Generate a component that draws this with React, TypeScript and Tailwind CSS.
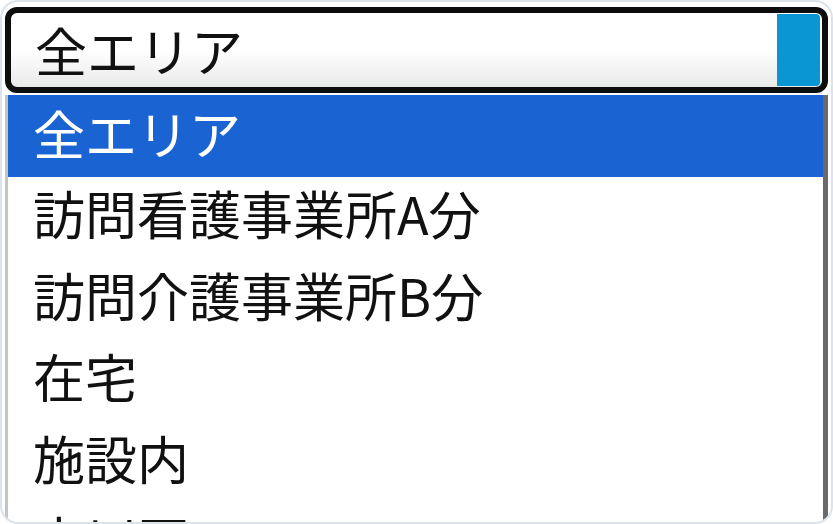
import React from "react";

const items = ["訪問看護事業所A分", "訪問介護事業所B分", "在宅", "施設内", "中川区"];

export default function App() {
  return (
    <div
      className="w-[833px] h-[524px] bg-white overflow-hidden"
      style={{ fontFamily: '"Noto Sans CJK JP", "Noto Sans", sans-serif' }}
    >
      <div className="w-full h-full border-2 border-[#dde3ea] rounded-[18px] overflow-hidden flex flex-col pt-[5px] px-[3px]">
        <div className="h-[86px] border-[6px] border-[#0d0d0d] rounded-[12px] flex overflow-hidden bg-gradient-to-b from-white via-white to-[#e9e9e9] shrink-0">
          <div className="flex-1 flex items-center pl-[24px] text-[52px] leading-none text-[#111]">
            全エリア
          </div>
          <div className="w-[43px] bg-[#0a96d3] my-px mr-[2px] rounded-r-[4px]"></div>
        </div>
        <div className="flex-1 mt-[2px] border-l-[3px] border-l-[#c4c4c4] border-r-[5px] border-r-[#6a6a6a] overflow-hidden">
          <div className="h-[82px] bg-[#1a63d3] text-white text-[52px] leading-[76px] pl-[25px]">
            全エリア
          </div>
          {items.map((t) => (
            <div key={t} className="h-[81.5px] text-[#111] text-[52px] leading-[72px] pl-[25px] whitespace-nowrap">
              {t}
            </div>
          ))}
        </div>
      </div>
    </div>
  );
}
